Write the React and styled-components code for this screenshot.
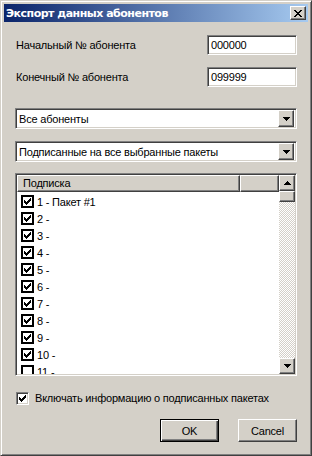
import React from "react";
import styled, { createGlobalStyle, css } from "styled-components";

const GlobalStyle = createGlobalStyle`
  html, body {
    margin: 0;
    padding: 0;
    background: #d4d0c8;
  }
  body {
    font-family: "Liberation Sans", Arial, sans-serif;
    font-size: 11px;
    letter-spacing: -0.2px;
    color: #000;
  }
`;

const raised = css`
  border: 1px solid;
  border-color: #fff #404040 #404040 #fff;
  box-shadow: inset -1px -1px 0 #808080, inset 1px 1px 0 #d4d0c8;
`;

const sunken = css`
  border: 1px solid;
  border-color: #808080 #fff #fff #808080;
  box-shadow: inset 1px 1px 0 #404040, inset -1px -1px 0 #d4d0c8;
`;

const Window = styled.div`
  width: 312px;
  height: 456px;
  box-sizing: border-box;
  background: #d4d0c8;
  border: 1px solid;
  border-color: #d4d0c8 #404040 #404040 #d4d0c8;
  box-shadow: inset 1px 1px 0 #fff, inset -1px -1px 0 #808080;
  padding: 3px;
  display: flex;
  flex-direction: column;
  overflow: hidden;
`;

const TitleBar = styled.div`
  height: 18px;
  flex: none;
  display: flex;
  align-items: center;
  justify-content: space-between;
  padding: 0 2px 0 2px;
  background: linear-gradient(to right, #0a246a, #a6caf0);
  color: #fff;
  font-family: "DejaVu Sans", Verdana, sans-serif;
  font-weight: bold;
  font-size: 11px;
  letter-spacing: -0.5px;
`;

const CloseButton = styled.div`
  width: 16px;
  height: 14px;
  box-sizing: border-box;
  ${raised};
  background: #d4d0c8;
  display: flex;
  align-items: center;
  justify-content: center;
`;

const Body = styled.div`
  flex: 1;
  padding: 13px 11px 0 11px;
  display: flex;
  flex-direction: column;
  white-space: nowrap;
`;

const FieldRow = styled.div`
  display: flex;
  align-items: center;
  justify-content: space-between;
  height: 20px;
  margin-bottom: ${p => p.$gap || 0}px;
  padding-left: 1px;
`;

const TextInput = styled.div`
  width: 90px;
  height: 20px;
  box-sizing: border-box;
  ${sunken};
  background: #fff;
  padding: 3px 0 0 3px;
  line-height: 13px;
`;

const Combo = styled.div`
  height: 21px;
  box-sizing: border-box;
  ${sunken};
  background: #fff;
  display: flex;
  align-items: center;
  justify-content: space-between;
  padding: 2px 2px 2px 3px;
  margin-top: ${p => p.$top || 0}px;
`;

const ArrowButton = styled.div`
  width: 16px;
  height: ${p => p.$h || 17}px;
  box-sizing: border-box;
  ${raised};
  background: #d4d0c8;
  display: flex;
  align-items: center;
  justify-content: center;
  flex: none;
`;

const ListView = styled.div`
  margin-top: 11px;
  height: 203px;
  box-sizing: border-box;
  ${sunken};
  background: #fff;
  padding: 1px;
  display: grid;
  grid-template-columns: 1fr 16px;
  overflow: hidden;
`;

const ListMain = styled.div`
  display: flex;
  flex-direction: column;
  overflow: hidden;
  min-width: 0;
`;

const HeaderRow = styled.div`
  display: grid;
  grid-template-columns: 223px 1fr;
  height: 17px;
  flex: none;
`;

const HeaderCell = styled.div`
  box-sizing: border-box;
  ${raised};
  background: #d4d0c8;
  padding: 1px 0 0 5px;
  line-height: 13px;
`;

const Items = styled.div`
  display: flex;
  flex-direction: column;
  padding-top: 1px;
`;

const Item = styled.div`
  height: 17px;
  display: flex;
  align-items: center;
  gap: 3px;
  padding-left: 4px;
  flex: none;
`;

const FlatBox = styled.div`
  width: 13px;
  height: 13px;
  box-sizing: border-box;
  border: 2px solid #000;
  background: #fff;
  display: flex;
  align-items: center;
  justify-content: center;
`;

const ScrollBar = styled.div`
  display: flex;
  flex-direction: column;
  background-color: #fff;
  background-image: conic-gradient(#d4d0c8 25%, #fff 0 50%, #d4d0c8 0 75%, #fff 0);
  background-size: 2px 2px;
`;

const Thumb = styled.div`
  height: 11px;
  box-sizing: border-box;
  ${raised};
  background: #d4d0c8;
`;

const Track = styled.div`
  flex: 1;
`;

const OptionRow = styled.label`
  display: flex;
  align-items: center;
  gap: 6px;
  margin-top: 15px;
  height: 14px;
  padding-left: 1px;
`;

const SunkenBox = styled.div`
  width: 13px;
  height: 13px;
  box-sizing: border-box;
  ${sunken};
  background: #fff;
  display: flex;
  align-items: center;
  justify-content: center;
`;

const ButtonBar = styled.div`
  display: flex;
  justify-content: flex-end;
  gap: 19px;
  margin-top: 14px;
`;

const Button = styled.div`
  width: 59px;
  height: 23px;
  box-sizing: border-box;
  background: #d4d0c8;
  display: flex;
  align-items: center;
  justify-content: center;
  ${p =>
    p.$default
      ? css`
          border: 1px solid #000;
          box-shadow: inset 1px 1px 0 #fff, inset -1px -1px 0 #404040, inset -2px -2px 0 #808080;
        `
      : raised};
`;

const Check = () => (
  <svg width="7" height="7" viewBox="0 0 7 7">
    <path d="M0 2h1v1h1v1h1V3h1V2h1V1h1V0h1v3H6v1H5v1H4v1H3v1H2V6H1V5H0z" fill="#000" />
  </svg>
);

const Down = () => (
  <svg width="7" height="4" viewBox="0 0 7 4">
    <path d="M0 0h7v1H6v1H5v1H4v1H3V3H2V2H1V1H0z" fill="#000" />
  </svg>
);

const Up = () => (
  <svg width="7" height="4" viewBox="0 0 7 4">
    <path d="M3 0h1v1h1v1h1v1h1v1H0V3h1V2h1V1h1z" fill="#000" />
  </svg>
);

const CloseX = () => (
  <svg width="8" height="7" viewBox="0 0 8 7">
    <path d="M0 0h2v1h1v1h2V1h1V0h2v1H7v1H6v1H5v1h1v1h1v1h1v1H6V6H5V5H3v1H2v1H0V6h1V5h1V4h1V3H2V2H1V1H0z" fill="#000" />
  </svg>
);

const items = [
  { label: "1 - Пакет #1", on: true },
  { label: "2 -", on: true },
  { label: "3 -", on: true },
  { label: "4 -", on: true },
  { label: "5 -", on: true },
  { label: "6 -", on: true },
  { label: "7 -", on: true },
  { label: "8 -", on: true },
  { label: "9 -", on: true },
  { label: "10 -", on: true },
  { label: "11 -", on: false },
];

const App = () => (
  <>
    <GlobalStyle />
    <Window>
      <TitleBar>
        <span>Экспорт данных абонентов</span>
        <CloseButton>
          <CloseX />
        </CloseButton>
      </TitleBar>
      <Body>
        <FieldRow $gap={12}>
          <span>Начальный № абонента</span>
          <TextInput>000000</TextInput>
        </FieldRow>
        <FieldRow>
          <span>Конечный № абонента</span>
          <TextInput>099999</TextInput>
        </FieldRow>
        <Combo $top={21}>
          <span>Все абоненты</span>
          <ArrowButton>
            <Down />
          </ArrowButton>
        </Combo>
        <Combo $top={12}>
          <span>Подписанные на все выбранные пакеты</span>
          <ArrowButton>
            <Down />
          </ArrowButton>
        </Combo>
        <ListView>
          <ListMain>
            <HeaderRow>
              <HeaderCell>Подписка</HeaderCell>
              <HeaderCell />
            </HeaderRow>
            <Items>
              {items.map(it => (
                <Item key={it.label}>
                  <FlatBox>{it.on && <Check />}</FlatBox>
                  <span>{it.label}</span>
                </Item>
              ))}
            </Items>
          </ListMain>
          <ScrollBar>
            <ArrowButton $h={16}>
              <Up />
            </ArrowButton>
            <Thumb />
            <Track />
            <ArrowButton $h={16}>
              <Down />
            </ArrowButton>
          </ScrollBar>
        </ListView>
        <OptionRow>
          <SunkenBox>
            <Check />
          </SunkenBox>
          <span>Включать информацию о подписанных пакетах</span>
        </OptionRow>
        <ButtonBar>
          <Button $default>OK</Button>
          <Button>Cancel</Button>
        </ButtonBar>
      </Body>
    </Window>
  </>
);

export default App;
